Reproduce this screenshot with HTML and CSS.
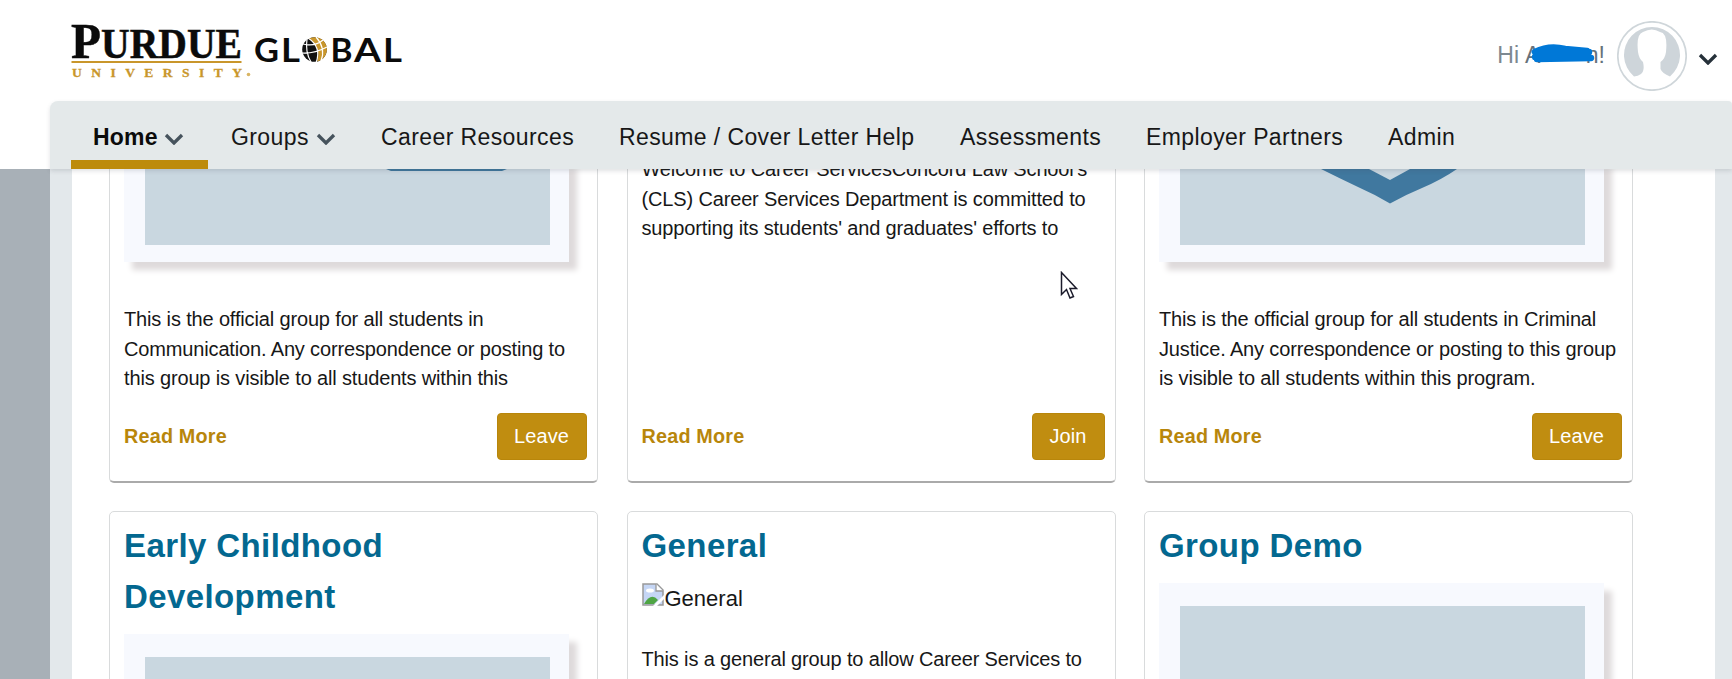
FILE: index.html
```html
<!DOCTYPE html>
<html lang="en">
<head>
<meta charset="utf-8">
<title>Purdue University Global - Career Services</title>
<link rel="stylesheet" href="styles.css">
</head>
<body>
<header class="header">
  <svg class="logo" viewBox="0 0 340 60" width="340" height="60">
    <g class="logo-serif">
      <text x="1" y="39.500" font-size="51.500" textLength="30" lengthAdjust="spacingAndGlyphs">P</text>
      <text x="31" y="39.500" font-size="41.500" textLength="141" lengthAdjust="spacingAndGlyphs">URDUE</text>
    </g>
    <rect class="gold" x="1.500" y="43" width="170" height="2"/>
    <text class="logo-sub" x="2" y="58.500" font-size="13.500" textLength="170">UNIVERSITY</text>
    <circle class="dot" cx="178.500" cy="56.500" r="1.800"/>
    <g class="logo-sans">
      <text x="184" y="43.500" font-size="32" textLength="25" lengthAdjust="spacingAndGlyphs">G</text>
      <text x="211" y="43.500" font-size="32" textLength="19" lengthAdjust="spacingAndGlyphs">L</text>
      <text x="260.500" y="43.500" font-size="32" textLength="22" lengthAdjust="spacingAndGlyphs">B</text>
      <text x="284" y="43.500" font-size="32" textLength="27" lengthAdjust="spacingAndGlyphs">A</text>
      <text x="313" y="43.500" font-size="32" textLength="19" lengthAdjust="spacingAndGlyphs">L</text>
    </g>
    <circle cx="244.500" cy="31.500" r="12.300" fill="#111"/>
    <path d="M239 20.500A12.300 12.300 0 1 1 247 43.500Q252 31 239 20.500Z" fill="#c9962b"/>
    <path d="M231 35Q244 36 257 29M238 20Q252 29 246 45M237 21Q235 34 241 44M246 19Q256 30 251 43M233 26Q245 29 253 22" fill="none" stroke="#fff" stroke-width="1.200"/>
  </svg>
  <div class="user">
    <span class="greet">Hi</span>
    <span class="name"><span>A</span><span>n!</span>
      <svg class="scribble" viewBox="0 0 66 20" width="66" height="20"><path d="M6 8Q20 1 36 5L58 7M6 13Q26 8 60 8M8 15L62 14M7 12L56 13" fill="none" stroke="#0078d7" stroke-width="6.500" stroke-linecap="round"/></svg>
    </span>
    <svg class="avatar" viewBox="0 0 70 70" width="70" height="70">
      <circle cx="35" cy="35" r="34.200" fill="#fff" stroke="#cfd6da" stroke-width="1.700"/>
      <path d="M17 55.500A28 28 0 1 1 53 55.500Q45 52 43.500 48V41Q48 38 49 31Q51 12 43 11Q35 6 26 11Q19 13 21 31Q22 38 26 41Q28 50 24 53Q21 55 17 55.500Z" fill="#ced5da"/>
    </svg>
    <svg class="caret" viewBox="0 0 20 12" width="20" height="12"><path d="M2 2L10 10L18 2" fill="none" stroke="#26313a" stroke-width="3.300"/></svg>
  </div>
</header>
<nav class="nav">
  <a class="item active">Home <svg viewBox="0 0 20 12" width="20" height="12"><path d="M2 2L10 10L18 2"/></svg></a>
  <a class="item">Groups <svg viewBox="0 0 20 12" width="20" height="12"><path d="M2 2L10 10L18 2"/></svg></a>
  <a class="item">Career Resources</a>
  <a class="item">Resume / Cover Letter Help</a>
  <a class="item">Assessments</a>
  <a class="item">Employer Partners</a>
  <a class="item">Admin</a>
</nav>
<main class="page">
  <section class="panel">
    <div class="cards">
      <article class="card upper">
        <div class="frame"><div class="art"><svg viewBox="0 0 405 77" width="405" height="77"><path d="M241 0H362L357 2H246Z" fill="#3f779d"/></svg></div></div>
        <p class="text">This is the official group for all students in<br>Communication. Any correspondence or posting to<br>this group is visible to all students within this</p>
        <div class="actions"><a class="more">Read More</a><button class="btn">Leave</button></div>
      </article>
      <article class="card upper">
        <p class="text welcome">Welcome to Career ServicesConcord Law School's<br>(CLS) Career Services Department is committed to<br>supporting its students' and graduates' efforts to</p>
        <div class="actions"><a class="more">Read More</a><button class="btn">Join</button></div>
      </article>
      <article class="card upper">
        <div class="frame"><div class="art"><svg viewBox="0 0 405 77" width="405" height="77"><path d="M141 0H277Q261 11 242 19Q225 26 210 34.500Q194 25 178 18Q159 9 141 0Z" fill="#40789f"/><path d="M189 0H230L210 11Z" fill="#c9d7e0"/></svg></div></div>
        <p class="text">This is the official group for all students in Criminal<br>Justice. Any correspondence or posting to this group<br>is visible to all students within this program.</p>
        <div class="actions"><a class="more">Read More</a><button class="btn">Leave</button></div>
      </article>
      <article class="card lower">
        <h2 class="title">Early Childhood<br>Development</h2>
        <div class="frame"><div class="art"></div></div>
      </article>
      <article class="card lower">
        <h2 class="title">General</h2>
        <div class="missing">
          <svg viewBox="0 0 22 23" width="22" height="23"><path d="M1 1H15L21 7V22H1Z" fill="#c5d6f5" stroke="#999" stroke-width="1.500"/><path d="M14 1V8H21" fill="#fff" stroke="#999" stroke-width="1.300"/><ellipse cx="8" cy="7.500" rx="4" ry="2" fill="#fff"/><path d="M2 21Q9 9 16 17L12 21Z" fill="#4fa544"/><path d="M11 23L22 12V16L15 23Z" fill="#fff"/></svg><span>General</span>
        </div>
        <p class="text">This is a general group to allow Career Services to<br>send messages to you. Student Resources</p>
      </article>
      <article class="card lower">
        <h2 class="title">Group Demo</h2>
        <div class="frame"><div class="art"></div></div>
      </article>
    </div>
  </section>
</main>
<svg class="pointer" viewBox="0 0 18 29" width="18" height="29"><path d="M1.500 1.500V23.500L6.500 18.500L10 27L13.500 25.500L10 17.500H16.500Z" fill="#fff" stroke="#1b1b2b" stroke-width="1.500"/></svg>
</body>
</html>
```
FILE: styles.css
```css
* { box-sizing: border-box; }
body {
  margin: 0;
  width: 1732px;
  height: 679px;
  overflow: hidden;
  display: flex;
  flex-direction: column;
  background: #fff;
  color: #171717;
  font-family: "Liberation Sans", Arial, sans-serif;
}
.header {
  height: 101px;
  flex: none;
  display: flex;
  justify-content: space-between;
  align-items: flex-start;
  padding: 18px 14px 0 70px;
}
.logo { overflow: visible; }
.logo-serif { font-family: "Liberation Serif", serif; font-weight: 700; fill: #0b0b0b; stroke: #0b0b0b; stroke-width: .5; }
.logo-sub { font-family: "Liberation Serif", serif; font-weight: 700; fill: #c9962b; stroke: #c9962b; stroke-width: .3; }
.logo-sans { font-family: Lato, sans-serif; font-weight: 700; fill: #0b0b0b; }
.gold { fill: #c9962b; }
.dot { fill: #d9b565; }
.user {
  display: flex;
  align-items: center;
  height: 74px;
  font-size: 23px;
  color: #7d8890;
}
.greet { margin-right: 6px; }
.name {
  position: relative;
  display: flex;
  justify-content: space-between;
  width: 80px;
  margin-right: 12px;
  color: #66727a;
}
.scribble { position: absolute; left: 4px; top: 2px; }
.avatar { margin-top: 1px; }
.caret { margin: 8px 0 0 11px; }
.nav {
  flex: none;
  position: relative;
  z-index: 2;
  height: 68px;
  margin-left: 50px;
  padding-left: 21px;
  display: grid;
  grid-template-columns: 138px 150px 238px 341px 186px 242px 120px;
  background: #e4e9ea;
  border-radius: 8px 4px 0 0;
  box-shadow: 0 2px 4px rgba(60, 70, 80, .16);
}
.item {
  padding: 23px 0 0 22px;
  font-size: 23px;
  line-height: 27px;
  letter-spacing: .4px;
  white-space: nowrap;
}
.item svg { margin-left: 0; vertical-align: 0; }
.item path { fill: none; stroke: #46535d; stroke-width: 3.3; }
.active { width: 137px; border-bottom: 9px solid #bd8b0b; font-weight: 700; color: #0b0b0b; letter-spacing: .2px; }
.page {
  flex: none;
  height: 510px;
  padding-left: 50px;
  background: #a8b0b7;
}
.panel {
  height: 510px;
  border: solid #e3e8eb;
  border-width: 0 17px 0 22px;
  background: #fff;
  overflow: hidden;
}
.cards {
  display: grid;
  grid-template-columns: repeat(3, 489px);
  grid-template-rows: 324px 300px;
  gap: 28px 28.5px;
  margin: -10px 0 0 37px;
}
.card {
  border: 1px solid #d9dbdc;
  border-radius: 5px;
  background: #fff;
  padding: 0 10px 0 14px;
  display: flex;
  flex-direction: column;
}
.upper { border-bottom: 2px solid #aaa; }
.frame {
  flex: none;
  width: 445px;
  height: 102px;
  padding: 0 19px 17px 21px;
  background: #f7f9fe;
  box-shadow: 8px 8px 6px #dedadb;
}
.art { height: 100%; background: #c9d7e0; }
.upper .art { padding-top: 9px; }
.art svg { display: block; }
.text {
  margin: 43px 0 0;
  font-size: 20px;
  line-height: 29.7px;
  letter-spacing: -.15px;
  white-space: nowrap;
}
.welcome { margin-top: -5px; }
.actions {
  margin-top: auto;
  margin-bottom: 21px;
  display: flex;
  align-items: center;
  justify-content: space-between;
}
.more { font-size: 19.8px; font-weight: 700; letter-spacing: .2px; color: #b8860b; }
.btn {
  height: 47px;
  padding: 0 17px 0 16px;
  border: 1px solid #b8860b;
  border-radius: 4px;
  background: #c08d10;
  color: #fff;
  font: 20px "Liberation Sans", Arial, sans-serif;
  letter-spacing: .1px;
}
.title {
  margin: 8px 0 12px;
  font-size: 33px;
  line-height: 51px;
  letter-spacing: .4px;
  color: #036890;
}
.lower .frame { height: 200px; padding-top: 23px; }
.missing { display: flex; height: 23px; font-size: 22px; line-height: 31px; }
.missing span { margin-left: 1px; }
.lower .text { margin-top: 39px; }
.pointer { position: absolute; left: 1060px; top: 271px; z-index: 3; }
```
